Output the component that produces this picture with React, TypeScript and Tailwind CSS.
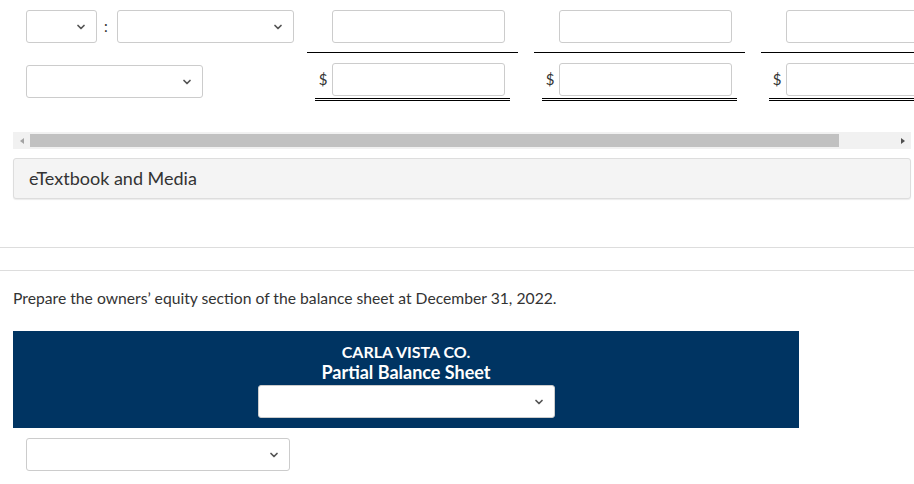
import { ChevronDown } from "lucide-react";

function Select({ className }: { className: string }) {
  return (
    <div
      className={`flex items-center justify-end rounded-[3px] border border-[#cccccc] bg-white pr-[9px] ${className}`}
    >
      <ChevronDown size={12} strokeWidth={3.5} className="text-[#555555]" />
    </div>
  );
}

function Input({ className = "" }: { className?: string }) {
  return (
    <div
      className={`h-[33px] w-[173px] rounded-[3px] border border-[#cccccc] bg-white ${className}`}
    />
  );
}

function AmountColumn() {
  return (
    <div className="flex w-[211px] shrink-0 flex-col">
      <div className="pt-[10px] pl-[25px]">
        <Input />
      </div>
      <div className="mt-[9px] h-px bg-black" />
      <div className="mt-[10px] flex items-center pl-[7px]">
        <span className="w-[18px] text-center text-[15px] text-[#333333]">$</span>
        <Input />
      </div>
      <div className="mx-[8px] mt-[2px] h-[3px] border-b-[3px] border-double border-black" />
    </div>
  );
}

export default function App() {
  return (
    <div className="h-[484px] w-[914px] overflow-hidden bg-white font-['Lato','Liberation_Sans',sans-serif] text-[#333333]">
      <div className="flex">
        <div className="w-[307px] shrink-0 pl-[26px]">
          <div className="flex items-center pt-[10px]">
            <Select className="h-[33px] w-[71px]" />
            <span className="w-[20px] pl-[7px] text-[15px]">:</span>
            <Select className="h-[33px] w-[177px]" />
          </div>
          <Select className="mt-[22px] h-[33px] w-[177px]" />
        </div>
        <div className="flex gap-[16px]">
          <AmountColumn />
          <AmountColumn />
          <AmountColumn />
        </div>
      </div>

      <div className="mx-[13px] mt-[31px] flex h-[17px] w-[898px] items-center bg-[#f1f1f1]">
        <div className="flex w-[17px] justify-center">
          <div className="h-0 w-0 border-y-[3.5px] border-r-[4px] border-y-transparent border-r-[#a3a3a3]" />
        </div>
        <div className="h-[13px] w-[809px] bg-[#c1c1c1]" />
        <div className="flex flex-1 justify-end pr-[6px]">
          <div className="h-0 w-0 border-y-[3.5px] border-l-[4px] border-y-transparent border-l-[#505050]" />
        </div>
      </div>

      <div className="mx-[13px] mt-[9px] flex h-[41px] w-[898px] items-center rounded-[3px] border border-[#dddddd] bg-[#f4f4f4] pl-[15px] text-[18px] shadow-[0_1px_1px_rgba(0,0,0,0.08)]">
        eTextbook and Media
      </div>

      <div className="mt-[48px] h-px bg-[#dddddd]" />
      <div className="mt-[22px] h-px bg-[#dddddd]" />

      <p className="mt-[17px] pl-[13px] text-[15.7px] leading-[20px]">
        Prepare the owners’ equity section of the balance sheet at December 31, 2022.
      </p>

      <div className="mx-[13px] mt-[23px] flex h-[97px] w-[786px] flex-col items-center bg-[#003462] pt-[10px] font-bold text-white">
        <div className="text-[16px] leading-[21px]">CARLA VISTA CO.</div>
        <div className="text-[18px] leading-[21px]">Partial Balance Sheet</div>
        <Select className="mt-[2px] h-[33px] w-[297px]" />
      </div>

      <Select className="ml-[26px] mt-[10px] h-[33px] w-[264px]" />
    </div>
  );
}
